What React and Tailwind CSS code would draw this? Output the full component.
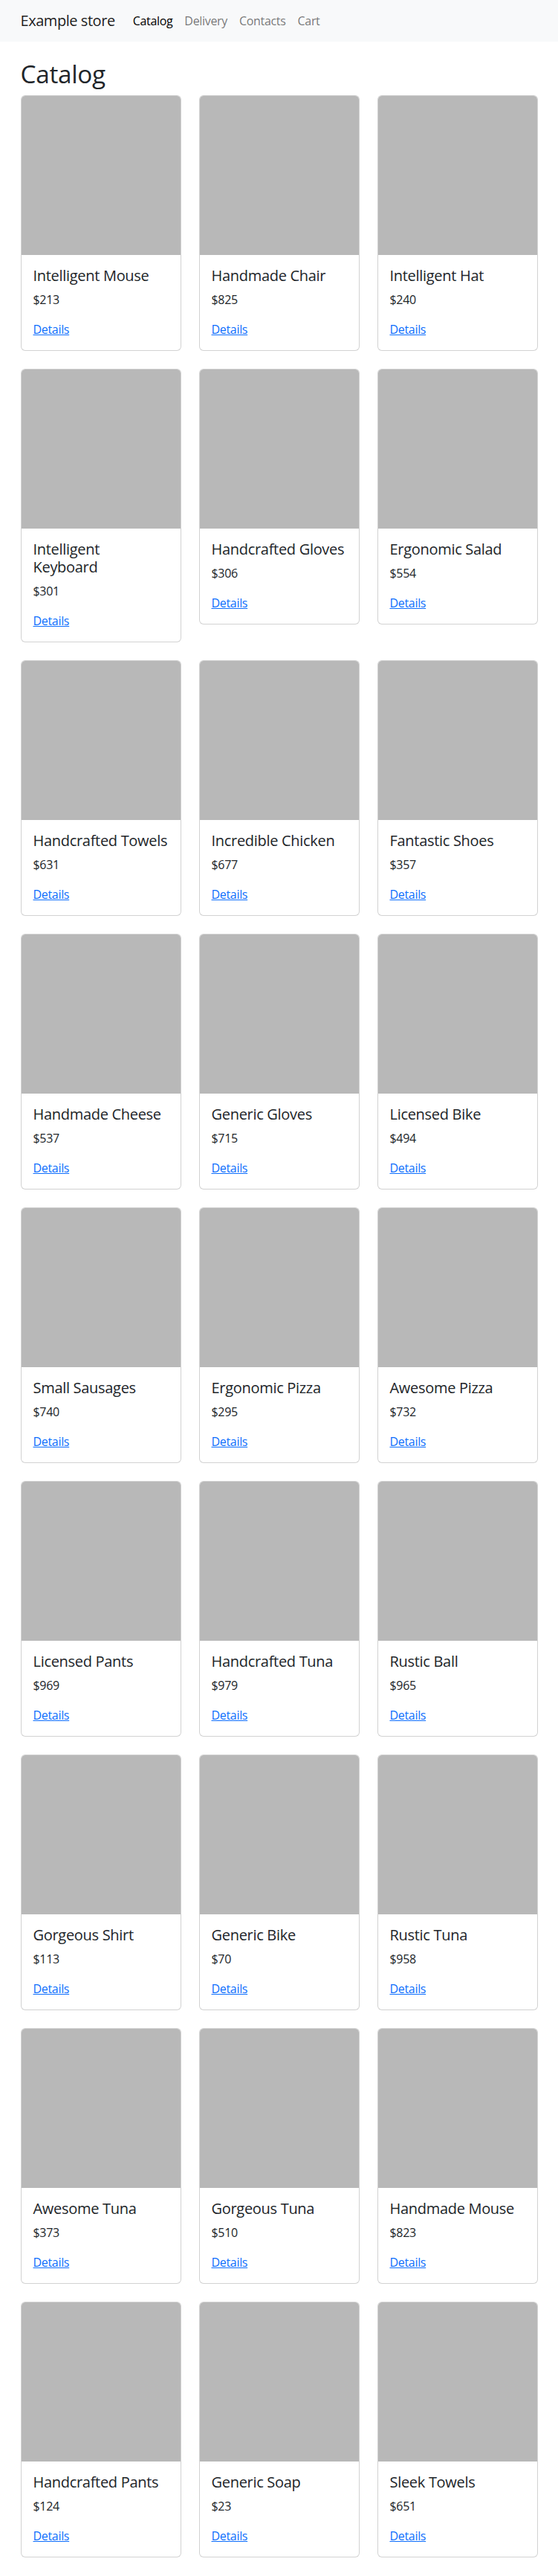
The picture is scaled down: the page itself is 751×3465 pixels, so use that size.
import React from "react";

const products = [
  ["Intelligent Mouse", 213],
  ["Handmade Chair", 825],
  ["Intelligent Hat", 240],
  ["Intelligent\nKeyboard", 301],
  ["Handcrafted Gloves", 306],
  ["Ergonomic Salad", 554],
  ["Handcrafted Towels", 631],
  ["Incredible Chicken", 677],
  ["Fantastic Shoes", 357],
  ["Handmade Cheese", 537],
  ["Generic Gloves", 715],
  ["Licensed Bike", 494],
  ["Small Sausages", 740],
  ["Ergonomic Pizza", 295],
  ["Awesome Pizza", 732],
  ["Licensed Pants", 969],
  ["Handcrafted Tuna", 979],
  ["Rustic Ball", 965],
  ["Gorgeous Shirt", 113],
  ["Generic Bike", 70],
  ["Rustic Tuna", 958],
  ["Awesome Tuna", 373],
  ["Gorgeous Tuna", 510],
  ["Handmade Mouse", 823],
  ["Handcrafted Pants", 124],
  ["Generic Soap", 23],
  ["Sleek Towels", 651],
];

function Card({ name, price }) {
  return (
    <div className="flex flex-col border border-black/[.175] rounded-[6px] bg-white">
      <div className="h-[214px] bg-[#b8b8b8] rounded-t-[5px]" />
      <div className="p-4">
        <h5 className="whitespace-pre-line text-[20px] font-medium leading-[1.2] mb-2 text-[#212529] tracking-[-0.3px]">
          {name}
        </h5>
        <p className="mb-4 text-[16px] leading-6 text-[#212529]">${price}</p>
        <a href="#" className="text-[16px] leading-6 text-[#0d6efd] underline">
          Details
        </a>
      </div>
    </div>
  );
}

export default function App() {
  return (
    <div
      className="min-h-screen bg-white text-[#212529] text-[16px] leading-6 tracking-[-0.02em]"
      style={{ fontFamily: '"Open Sans", "Noto Sans", sans-serif' }}
    >
      <nav className="bg-[#f8f9fa] h-14">
        <div className="max-w-[720px] mx-auto px-3 h-14 flex items-center">
          <a href="#" className="text-[20px] leading-[30px] py-[5px] mr-4 text-black/90 tracking-[-0.45px]">
            Example store
          </a>
          <ul className="flex">
            <li>
              <a href="#" className="block px-2 py-2 text-black">Catalog</a>
            </li>
            <li>
              <a href="#" className="block px-2 py-2 text-black/55">Delivery</a>
            </li>
            <li>
              <a href="#" className="block px-2 py-2 text-black/55">Contacts</a>
            </li>
            <li>
              <a href="#" className="block px-2 py-2 text-black/55">Cart</a>
            </li>
          </ul>
        </div>
      </nav>
      <main className="max-w-[720px] mx-auto px-3 pt-6">
        <h1 className="text-[33.3px] font-medium leading-[1.2] mb-2 tracking-[-0.3px]">Catalog</h1>
        <div className="grid grid-cols-3 gap-x-6 items-start">
          {products.map(([n, p]) => (
            <div key={n} className="mb-6">
              <Card name={n} price={p} />
            </div>
          ))}
        </div>
      </main>
    </div>
  );
}
